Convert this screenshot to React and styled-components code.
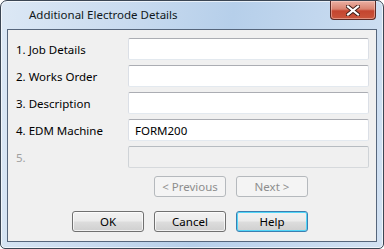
import React from "react";
import styled, { createGlobalStyle } from "styled-components";

const Global = createGlobalStyle`
  html, body { margin: 0; padding: 0; background: #ffffff; overflow: hidden; }
  * { box-sizing: border-box; }
`;

const FONT = `"Noto Sans", "Open Sans", sans-serif`;

const Window = styled.div`
  width: 384px;
  height: 249px;
  border: 1px solid #3b4654;
  border-radius: 7px 7px 5px 5px;
  background: linear-gradient(100deg, #dce8f5 0%, #c9dbef 30%, #b6cfea 55%, #c5d9ef 80%, #d3e2f3 100%);
  box-shadow: inset 0 0 0 1px rgba(255, 255, 255, 0.65);
  display: flex;
  flex-direction: column;
  padding: 0 6px 6px 6px;
  font-family: ${FONT};
`;

const TitleBar = styled.div`
  height: 28px;
  display: flex;
  align-items: flex-start;
  justify-content: space-between;
`;

const Title = styled.div`
  margin: 6px 0 0 22px;
  font-size: 11.5px;
  color: #101820;
  line-height: 16px;
`;

const CloseButton = styled.div`
  width: 46px;
  height: 19px;
  margin-right: 1px;
  border: 1px solid #5b2a25;
  border-top: none;
  border-radius: 0 0 4px 4px;
  background: linear-gradient(#eab0a3 0%, #d98370 45%, #c4452f 55%, #c9553c 100%);
  box-shadow: inset 0 0 0 1px rgba(255, 220, 210, 0.45);
  display: flex;
  align-items: center;
  justify-content: center;
`;

const Client = styled.div`
  flex: 1;
  border: 1px solid #56667c;
  background: #f0f0f0;
  padding: 8px 7px 8px 7px;
  display: flex;
  flex-direction: column;
`;

const Form = styled.div`
  display: grid;
  grid-template-columns: 113px 1fr;
  grid-auto-rows: 22px;
  row-gap: 5px;
`;

const Label = styled.div`
  font-size: 11.5px;
  color: ${(p) => (p.$disabled ? "#a0a0a0" : "#000")};
  display: flex;
  align-items: center;
  padding-left: 1px;
`;

const Field = styled.div`
  height: 22px;
  border: 1px solid;
  border-color: ${(p) => (p.$disabled ? "#b7bcc1 #cfd3d7 #d6d9dc #cfd3d7" : "#abadb3 #dbdfe6 #e3e9ef #dbdfe6")};
  border-radius: 2px;
  background: ${(p) => (p.$disabled ? "#f0f0f0" : "#ffffff")};
  font-size: 11.5px;
  color: #000;
  display: flex;
  align-items: center;
  padding-left: 6px;
`;

const ButtonGrid = styled.div`
  display: grid;
  grid-template-columns: repeat(3, 72px);
  column-gap: 10px;
  padding-left: 57px;
  margin-top: ${(p) => p.$top}px;
`;

const Button = styled.div`
  height: 21px;
  border: 1px solid ${(p) => (p.$default ? "#3c7fb1" : p.$disabled ? "#b5b9bd" : "#707070")};
  border-radius: 3px;
  background: ${(p) =>
    p.$disabled
      ? "#f4f4f4"
      : "linear-gradient(#f2f2f2 0%, #ebebeb 48%, #dddddd 52%, #cfcfcf 100%)"};
  box-shadow: ${(p) =>
    p.$default
      ? "inset 0 0 0 1px #52d6f8"
      : p.$disabled
      ? "none"
      : "inset 0 0 0 1px rgba(255,255,255,0.7)"};
  font-size: 11.5px;
  color: ${(p) => (p.$disabled ? "#8d8d8d" : "#000")};
  display: flex;
  align-items: center;
  justify-content: center;
  grid-column: ${(p) => p.$col || "auto"};
`;

const rows = [
  { label: "1. Job Details", value: "" },
  { label: "2. Works Order", value: "" },
  { label: "3. Description", value: "" },
  { label: "4. EDM Machine", value: "FORM200" },
  { label: "5.", value: "", disabled: true },
];

export default function App() {
  return (
    <>
      <Global />
      <Window>
        <TitleBar>
          <Title>Additional Electrode Details</Title>
          <CloseButton>
            <svg width="14" height="11" viewBox="0 0 14 11">
              <path d="M2 1.5 L12 9.5 M12 1.5 L2 9.5" stroke="#3a1a14" strokeWidth="4" strokeLinecap="square" />
              <path d="M2 1.5 L12 9.5 M12 1.5 L2 9.5" stroke="#ffffff" strokeWidth="2.2" strokeLinecap="square" />
            </svg>
          </CloseButton>
        </TitleBar>
        <Client>
          <Form>
            {rows.map((r) => (
              <React.Fragment key={r.label}>
                <Label $disabled={r.disabled}>{r.label}</Label>
                <Field $disabled={r.disabled}>{r.value}</Field>
              </React.Fragment>
            ))}
          </Form>
          <ButtonGrid $top={8}>
            <Button $col={2} $disabled>&lt; Previous</Button>
            <Button $disabled>Next &gt;</Button>
          </ButtonGrid>
          <ButtonGrid $top={14}>
            <Button>OK</Button>
            <Button>Cancel</Button>
            <Button $default>Help</Button>
          </ButtonGrid>
        </Client>
      </Window>
    </>
  );
}
